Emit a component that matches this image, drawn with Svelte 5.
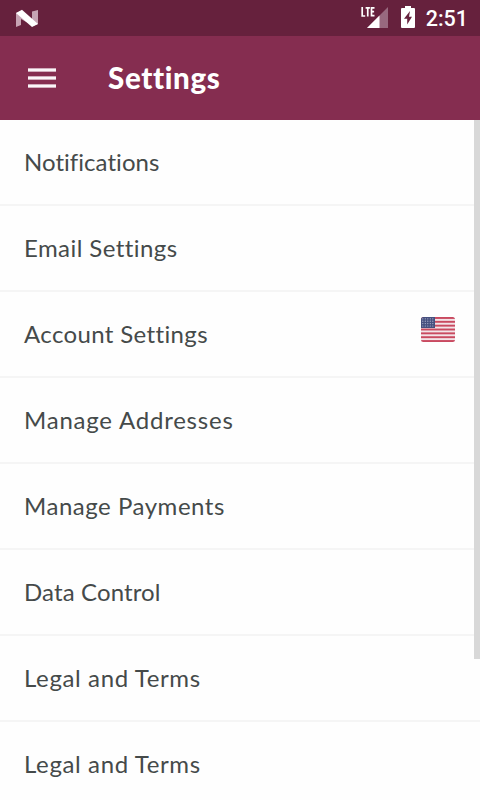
<script>
  const rows = [
    { label: 'Notifications', spacing: 0.04 },
    { label: 'Email Settings', spacing: 0.43 },
    { label: 'Account Settings', spacing: 0.36, flag: true },
    { label: 'Manage Addresses', spacing: 0.78 },
    { label: 'Manage Payments', spacing: 0.53 },
    { label: 'Data Control', spacing: 0.12 },
    { label: 'Legal and Terms', spacing: 0.63 },
    { label: 'Legal and Terms', spacing: 0.63 }
  ];
  const stripes = [0, 1, 2, 3, 4, 5, 6];
  const stars = [0, 1, 2, 3].flatMap((r) => [0, 1, 2, 3, 4].map((c) => ({ x: 1.8 + c * 2.5, y: 1.8 + r * 2.4 })));
</script>

<div class="screen">
  <div class="status">
    <svg class="nougat" width="24" height="20" viewBox="0 0 24 20">
      <path d="M1 4 6 2 13 9v5L6 10v6L1 18z" fill="#c6a3b3" />
      <path d="M17 2.5 23 1v14l-5 2-6-6V7l5 3z" fill="#c6a3b3" />
      <path d="M1 4 7 0.7 23 15 17 18z" fill="#fff" />
    </svg>
    <div class="system">
      <svg class="signal" width="28" height="24" viewBox="0 0 28 24">
        <path d="M27 2v21H6z" fill="#98697f" />
        <path d="M18.5 10.5V23H6z" fill="#fff" />
        <path d="M1.2 2v9H4.2M4.6 2.8H8.9M6.75 2.8V11.5M13.5 2.8H10.5V10.7H13.5M10.5 6.7H13.1" fill="none" stroke="#66213d" stroke-width="3" />
        <path d="M1.2 2v9H4.2M4.6 2.8H8.9M6.75 2.8V11.5M13.5 2.8H10.5V10.7H13.5M10.5 6.7H13.1" fill="none" stroke="#fff" stroke-width="1.7" />
      </svg>
      <svg class="battery" width="14" height="22" viewBox="0 0 14 22">
        <path d="M4 0h6v2h3q1 0 1 1v18q0 1-1 1H1q-1 0-1-1V3q0-1 1-1h3z" fill="#fff" />
        <path d="M9 5 3 12.8h3.2v5.7L11 10.8H8z" fill="#66213d" />
      </svg>
      <span class="clock">2:51</span>
    </div>
  </div>

  <header>
    <div class="menu"><i></i><i></i><i></i></div>
    <h1>Settings</h1>
  </header>

  <main>
    <ul>
      {#each rows as row}
        <li>
          <span style="letter-spacing: {row.spacing}px">{row.label}</span>
          {#if row.flag}
            <svg class="flag" width="34" height="25" viewBox="0 0 34 25">
              <defs><clipPath id="flag-shape"><rect width="34" height="25" rx="2.5" /></clipPath></defs>
              <g clip-path="url(#flag-shape)">
                <rect width="34" height="25" fill="#f3e4e8" />
                {#each stripes as i}
                  <rect y={i * 3.846} width="34" height="1.923" fill="#c94a60" />
                {/each}
                <rect width="14" height="11" fill="#46507f" />
                {#each stars as star}
                  <circle cx={star.x} cy={star.y} r="0.6" fill="#b4b9d4" />
                {/each}
              </g>
            </svg>
          {/if}
        </li>
      {/each}
    </ul>
    <div class="scrollbar"></div>
  </main>
</div>

<style>
  :global(body) {
    margin: 0;
    overflow: hidden;
  }
  .screen {
    width: 480px;
    height: 800px;
    overflow: hidden;
    display: flex;
    flex-direction: column;
    background: #fefefe;
    font-family: Lato, 'Open Sans', sans-serif;
  }
  .status {
    flex: none;
    height: 36px;
    box-sizing: border-box;
    padding: 0 12px 0 15px;
    display: flex;
    align-items: center;
    justify-content: space-between;
    background: #66213d;
  }
  .nougat {
    margin-top: 1px;
  }
  .system {
    display: flex;
    align-items: center;
  }
  .signal {
    margin-top: -2px;
  }
  .battery {
    margin: -2px 11px 0 12px;
  }
  .clock {
    font: 500 21.5px/38px Roboto, sans-serif;
    color: #fff;
    height: 36px;
  }
  header {
    flex: none;
    height: 84px;
    display: flex;
    align-items: center;
    padding-left: 28px;
    background: #852d50;
  }
  .menu {
    width: 28px;
    margin: 0 52px 1px 0;
    display: flex;
    flex-direction: column;
    gap: 4px;
  }
  .menu i {
    height: 2px;
    background: #fbf5f8;
    border: solid #d0adbc;
    border-width: 1px 0;
  }
  h1 {
    margin: 0;
    font-size: 29.5px;
    line-height: 84px;
    font-weight: 900;
    letter-spacing: 0.65px;
    color: #fff;
  }
  main {
    flex: 1;
    min-height: 0;
    position: relative;
  }
  ul {
    margin: 0;
    padding: 0;
    list-style: none;
  }
  li {
    height: 86px;
    box-sizing: border-box;
    padding: 0 25px 0 24px;
    display: flex;
    align-items: center;
    justify-content: space-between;
    border-bottom: 2px solid #f5f5f5;
    font-size: 24px;
    line-height: 30px;
    color: #454a4a;
  }
  .flag {
    margin-bottom: 9px;
  }
  .scrollbar {
    position: absolute;
    top: 0;
    right: 0;
    width: 6px;
    height: 539px;
    background: #d8d8d8;
  }
</style>
